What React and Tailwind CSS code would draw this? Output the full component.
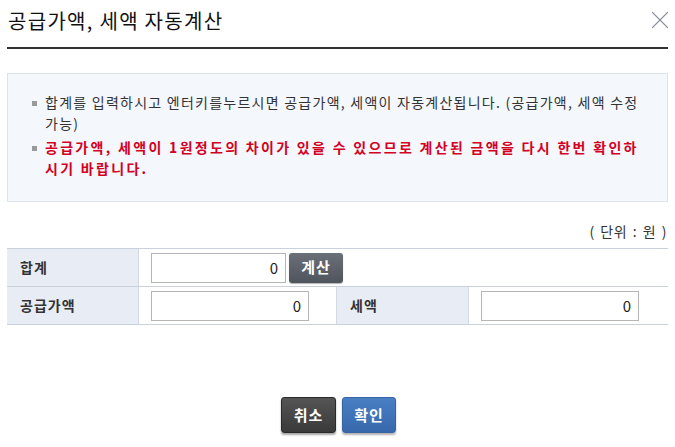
import { X } from "lucide-react";

const font = { fontFamily: '"Noto Sans CJK KR", "Noto Sans", sans-serif' };

const NumInput = ({ className }) => (
  <input
    type="text"
    defaultValue="0"
    readOnly
    className={`h-[30px] border border-[#b5b5b5] bg-white text-right pr-[7px] text-[15px] text-[#222] outline-none ${className}`}
  />
);

export default function App() {
  return (
    <div className="w-[675px] h-[447px] bg-white px-[7px] text-[#333]" style={font}>
      {/* Header */}
      <div className="h-[49px] border-b-2 border-[#333] flex items-center justify-between pl-[1px] pb-[6px]">
        <h1 className="text-[20px] leading-none text-[#111] tracking-[1.3px]">공급가액, 세액 자동계산</h1>
        <X className="w-[30px] h-[30px] text-[#8a90a0] -mr-[7px] -mt-[1px]" strokeWidth={0.9} />
      </div>

      {/* Notice */}
      <div className="mt-[24px] h-[129px] bg-[#f4f7fc] border border-[#dfe4ea] pl-[24px] pr-[10px] pt-[18px] text-[14px] leading-[21px]">
        <div className="flex">
          <span className="w-[5px] h-[5px] bg-[#9a9a9a] mt-[9px] mr-[8px] shrink-0" />
          <p className="tracking-[1.25px] whitespace-nowrap">
            합계를 입력하시고 엔터키를누르시면 공급가액, 세액이 자동계산됩니다. (공급가액, 세액 수정
            <br />
            가능)
          </p>
        </div>
        <div className="flex mt-[3px]">
          <span className="w-[5px] h-[5px] bg-[#9a9a9a] mt-[9px] mr-[8px] shrink-0" />
          <p className="font-bold text-[#d4001f] tracking-[2.3px] whitespace-nowrap">
            공급가액, 세액이 1원정도의 차이가 있을 수 있으므로 계산된 금액을 다시 한번 확인하
            <br />
            시기 바랍니다.
          </p>
        </div>
      </div>

      {/* Unit */}
      <div className="mt-[19px] text-right text-[14px] leading-[20px] pr-[1px] tracking-[0.5px] [word-spacing:2px]">( 단위 : 원 )</div>

      {/* Table */}
      <div className="mt-[7px] border-t border-[#c9d1dc] text-[14px]">
        <div className="grid grid-cols-[132px_1fr] h-[38px] border-b border-[#c9d1dc]">
          <div className="bg-[#e8edf5] border-r border-[#d3dae4] flex items-center pl-[13px] font-bold text-[#333] tracking-[1px]">합계</div>
          <div className="flex items-center pl-[12px] gap-[3px]">
            <NumInput className="w-[135px]" />
            <button className="w-[54px] h-[30px] rounded-[3px] bg-gradient-to-b from-[#6b7078] to-[#50545c] text-white font-bold text-[15px] tracking-[1px] shadow-[0_1px_1px_rgba(0,0,0,0.3)]">
              계산
            </button>
          </div>
        </div>
        <div className="grid grid-cols-[132px_198px_132px_1fr] h-[38px] border-b border-[#c9d1dc]">
          <div className="bg-[#e8edf5] border-r border-[#d3dae4] flex items-center pl-[13px] font-bold text-[#333] tracking-[1px]">공급가액</div>
          <div className="flex items-center pl-[12px] border-r border-[#d3dae4]">
            <NumInput className="w-[158px]" />
          </div>
          <div className="bg-[#e8edf5] border-r border-[#d3dae4] flex items-center pl-[13px] font-bold text-[#333] tracking-[1px]">세액</div>
          <div className="flex items-center pl-[12px]">
            <NumInput className="w-[158px]" />
          </div>
        </div>
      </div>

      {/* Buttons */}
      <div className="mt-[72px] flex justify-center gap-[6px] pl-[2px]">
        <button className="w-[55px] h-[36px] rounded-[3px] border border-[#2a2a2a] bg-gradient-to-b from-[#555] to-[#3a3a3a] text-white font-bold text-[15px] tracking-[1px] shadow-[0_2px_2px_rgba(0,0,0,0.35)]">
          취소
        </button>
        <button className="w-[54px] h-[36px] rounded-[3px] border border-[#3563a3] bg-gradient-to-b from-[#4a7fc4] to-[#3768ab] text-white font-bold text-[15px] tracking-[1px] shadow-[0_2px_2px_rgba(0,0,0,0.3)]">
          확인
        </button>
      </div>
    </div>
  );
}
